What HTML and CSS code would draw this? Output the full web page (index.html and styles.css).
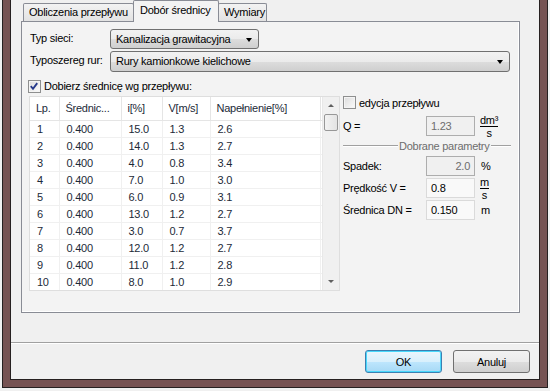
FILE: index.html
```html
<!DOCTYPE html>
<html lang="pl">
<head>
  <meta charset="UTF-8">
  <title>Dobór średnicy</title>
  <link rel="stylesheet" href="styles.css">
</head>
<body>
  <div class="window">
    <div class="client">

      <!-- Tabs -->
      <div class="tab-area">
        <div class="tab-strip">
          <div class="tab tab-flow">Obliczenia przepływu</div>
          <div class="tab tab-diam active">Dobór średnicy</div>
          <div class="tab tab-dim">Wymiary</div>
        </div>

        <div class="panel">
          <div class="form-row">
            <span class="label">Typ sieci:</span>
            <div class="combo combo-short">Kanalizacja grawitacyjna<span class="arrow"></span></div>
          </div>
          <div class="form-row row-2">
            <span class="label">Typoszereg rur:</span>
            <div class="combo combo-wide">Rury kamionkowe kielichowe<span class="arrow"></span></div>
          </div>
          <div class="check-row">
            <span class="checkbox checked">
              <svg width="13" height="13" viewBox="0 0 13 13"><path d="M3 6.2 L5.4 9 L10 2.8" fill="none" stroke="#25398a" stroke-width="2"/></svg>
            </span>
            Dobierz średnicę wg przepływu:
          </div>

          <div class="main">
            <!-- List view -->
            <div class="list">
              <div class="list-body">
                <table class="grid">
                  <thead>
                    <tr><th class="c-lp">Lp.</th><th class="c-dn">Średnic...</th><th class="c-i">i[%]</th><th class="c-v">V[m/s]</th><th class="c-n">Napełnienie[%]</th><th class="c-x"></th></tr>
                  </thead>
                  <tbody>
                    <tr><td>1</td><td>0.400</td><td>15.0</td><td>1.3</td><td>2.6</td><td></td></tr>
                    <tr><td>2</td><td>0.400</td><td>14.0</td><td>1.3</td><td>2.7</td><td></td></tr>
                    <tr><td>3</td><td>0.400</td><td>4.0</td><td>0.8</td><td>3.4</td><td></td></tr>
                    <tr><td>4</td><td>0.400</td><td>7.0</td><td>1.0</td><td>3.0</td><td></td></tr>
                    <tr><td>5</td><td>0.400</td><td>6.0</td><td>0.9</td><td>3.1</td><td></td></tr>
                    <tr><td>6</td><td>0.400</td><td>13.0</td><td>1.2</td><td>2.7</td><td></td></tr>
                    <tr><td>7</td><td>0.400</td><td>3.0</td><td>0.7</td><td>3.7</td><td></td></tr>
                    <tr><td>8</td><td>0.400</td><td>12.0</td><td>1.2</td><td>2.7</td><td></td></tr>
                    <tr><td>9</td><td>0.400</td><td>11.0</td><td>1.2</td><td>2.8</td><td></td></tr>
                    <tr><td>10</td><td>0.400</td><td>8.0</td><td>1.0</td><td>2.9</td><td></td></tr>
                  </tbody>
                </table>
              </div>
              <div class="scrollbar">
                <span class="scroll-btn"><span class="tri-up"></span></span>
                <span class="thumb"></span>
                <span class="scroll-track"></span>
                <span class="scroll-btn"><span class="tri-down"></span></span>
              </div>
            </div>

            <!-- Parameters -->
            <div class="params">
              <div class="check-row small">
                <span class="checkbox"></span>
                edycja przepływu
              </div>
              <div class="param-row q-row">
                <span class="p-label">Q =</span>
                <span class="field disabled">1.23</span>
                <span class="unit frac"><span class="num">dm³</span><span class="den">s</span></span>
              </div>
              <div class="group-head">
                <span class="g-line short"></span>
                <span class="g-text">Dobrane parametry</span>
                <span class="g-line"></span>
              </div>
              <div class="param-row">
                <span class="p-label">Spadek:</span>
                <span class="field disabled right">2.0</span>
                <span class="unit">%</span>
              </div>
              <div class="param-row">
                <span class="p-label">Prędkość V =</span>
                <span class="field readonly">0.8</span>
                <span class="unit frac"><span class="num">m</span><span class="den">s</span></span>
              </div>
              <div class="param-row">
                <span class="p-label">Średnica DN =</span>
                <span class="field readonly">0.150</span>
                <span class="unit">m</span>
              </div>
            </div>
          </div>
        </div>
      </div>

      <!-- Buttons -->
      <div class="footer">
        <div class="buttons">
          <button class="btn default">OK</button>
          <button class="btn">Anuluj</button>
        </div>
      </div>

    </div>
  </div>
</body>
</html>
```

FILE: styles.css
```css
/* Base */
* {
  margin: 0;
  padding: 0;
  box-sizing: border-box;
}

body {
  background-color: #f0f0f0;
  font-family: "Liberation Sans", Arial, sans-serif;
  font-size: 11px;
  letter-spacing: -0.25px;
  color: #000;
  width: 550px;
  height: 391px;
  overflow: hidden;
}

/* Window frame */
.window {
  margin-left: 2px;
  width: 546px;
  height: 388px;
  background-color: #765252;
  border: 1px solid #262020;
  border-top: none;
  padding: 0 7px 7px;
}

.client {
  height: 380px;
  background-color: #f0f0f0;
  border: 1px solid #262020;
  border-top: none;
  display: flex;
  flex-direction: column;
}

/* Tabs */
.tab-area {
  padding: 0 19px 0 10px;
}

.tab-strip {
  display: flex;
  align-items: flex-end;
  height: 21px;
  padding-left: 2px;
}

.tab {
  height: 18px;
  line-height: 16px;
  padding-left: 5px;
  border: 1px solid #898c95;
  border-bottom: none;
  border-radius: 2px 2px 0 0;
  background: linear-gradient(#f3f3f3, #e2e2e2);
  white-space: nowrap;
}

.tab-flow { width: 111px; margin-right: -1px; }
.tab-diam { width: 86px; }
.tab-dim { width: 49px; margin-left: -1px; }

.tab.active {
  position: relative;
  z-index: 2;
  height: 22px;
  margin-bottom: -1px;
  line-height: 18px;
  padding-left: 6px;
  background: #f3f3f3;
}

.panel {
  height: 292px;
  border: 1px solid #898c95;
  background-color: #f3f3f3;
  box-shadow: inset -1px -1px 0 #ffffff;
  padding: 7px 8px 0 8px;
}

/* Form rows */
.form-row {
  display: flex;
  align-items: flex-start;
  height: 20px;
}

.row-2 {
  margin-top: 2px;
  height: 21px;
}

.label {
  width: 80px;
  padding-top: 3px;
}

.combo {
  position: relative;
  height: 100%;
  line-height: 18px;
  padding-left: 5px;
  border: 1px solid #707070;
  border-radius: 3px;
  background: linear-gradient(#f2f2f2 0%, #ebebeb 50%, #dddddd 51%, #cfcfcf 100%);
}

.combo-short { width: 149px; }
.combo-wide { width: 400px; }

.arrow {
  position: absolute;
  right: 6px;
  top: 8px;
  border-left: 3.5px solid transparent;
  border-right: 3.5px solid transparent;
  border-top: 4px solid #000;
}

.check-row {
  display: flex;
  align-items: center;
  gap: 3px;
  margin-top: 7px;
  height: 14px;
  margin-left: -2px;
}

.checkbox {
  width: 13px;
  height: 13px;
  border: 1px solid #8e8f8f;
  background: linear-gradient(135deg, #dcdcdc, #fbfbfb);
  box-shadow: inset 0 0 0 1px #f4f4f4;
  display: flex;
}

.checkbox.checked svg {
  margin: -1px 0 0 -1px;
}

/* Main area */
.main {
  display: flex;
  margin-top: 3px;
}

.list {
  display: flex;
  width: 311px;
  height: 195px;
  margin-left: -1px;
  border: 1px solid #dedede;
  background-color: #fff;
}

.list-body {
  width: 292px;
  overflow: hidden;
}

.grid {
  border-collapse: collapse;
  table-layout: fixed;
  width: 292px;
  color: #1c2a38;
}

.grid th {
  height: 23px;
  font-weight: normal;
  text-align: left;
  padding-left: 6px;
  border-right: 1px solid #e5e5e5;
  border-bottom: 1px solid #e5e5e5;
}

.grid td {
  height: 17px;
  padding-left: 7px;
  border-right: 1px solid #f0f0f0;
  border-bottom: 1px solid #f0f0f0;
  white-space: nowrap;
}

.c-lp { width: 29px; }
.c-dn { width: 62px; }
.c-i { width: 41px; }
.c-v { width: 48px; }
.c-n { width: 110px; }
.c-x { width: 2px; }

.scrollbar {
  width: 17px;
  display: flex;
  flex-direction: column;
  align-items: center;
  background-color: #f0f0f0;
  border-left: 1px solid #e8e8e8;
}

.scroll-btn {
  height: 17px;
  width: 100%;
  display: flex;
  align-items: center;
  justify-content: center;
}

.tri-up, .tri-down {
  border-left: 3px solid transparent;
  border-right: 3px solid transparent;
}

.tri-up { border-bottom: 3px solid #606060; }
.tri-down { border-top: 3px solid #606060; }

.thumb {
  width: 14px;
  height: 17px;
  border: 1px solid #979797;
  border-radius: 2px;
  background: linear-gradient(90deg, #f2f2f2, #e3e3e3);
}

.scroll-track {
  flex: 1;
}

/* Parameters column */
.params {
  margin-left: 3px;
  width: 173px;
}

.params .check-row {
  margin-top: 0;
  margin-left: 0;
  height: 13px;
}

.param-row {
  display: flex;
  align-items: center;
  height: 20px;
  margin-top: 2px;
}

.q-row {
  margin-top: 7px;
}

.p-label {
  width: 83px;
}

.field {
  width: 49px;
  height: 20px;
  line-height: 18px;
  padding: 0 4px;
  border: 1px solid #c6c6c6;
}

.field.disabled {
  background-color: #f0f0f0;
  border-color: #adadad;
  color: #6d6d6d;
}

.field.readonly {
  background-color: #f9f9f9;
  border-color: #dadada;
}

.field.right {
  text-align: right;
}

.unit {
  margin-left: 6px;
}

.frac {
  display: inline-flex;
  flex-direction: column;
  align-items: center;
  line-height: 10px;
  margin-left: 5px;
}

.frac .num {
  border-bottom: 1px solid #000;
  padding-bottom: 1px;
}

.frac .den {
  padding-top: 1px;
}

.group-head {
  display: flex;
  align-items: center;
  height: 16px;
  margin-top: 2px;
}

.g-line {
  flex: 1;
  height: 2px;
  border-top: 1px solid #a0a0a0;
  border-bottom: 1px solid #ffffff;
}

.g-line.short {
  flex: none;
  width: 55px;
}

.g-text {
  color: #6d6d6d;
  padding: 0 1px;
}

/* Footer */
.footer {
  flex: 1;
  margin-top: 29px;
  border-top: 1px solid #a0a0a0;
  box-shadow: inset 0 1px 0 #ffffff;
}

.buttons {
  display: flex;
  justify-content: flex-end;
  gap: 11px;
  padding: 7px 9px 0 0;
}

.btn {
  width: 77px;
  height: 23px;
  font-family: inherit;
  font-size: 11px;
  letter-spacing: inherit;
  color: #000;
  border: 1px solid #707070;
  border-radius: 3px;
  background: linear-gradient(#f2f2f2 0%, #ebebeb 50%, #dddddd 51%, #cfcfcf 100%);
}

.btn.default {
  border-color: #3c7fb1;
  box-shadow: inset 0 0 0 1px #48d8fb;
  background: linear-gradient(#eaf6fd 0%, #d9f0fc 50%, #bee6fd 51%, #a7d9f5 100%);
}
```
